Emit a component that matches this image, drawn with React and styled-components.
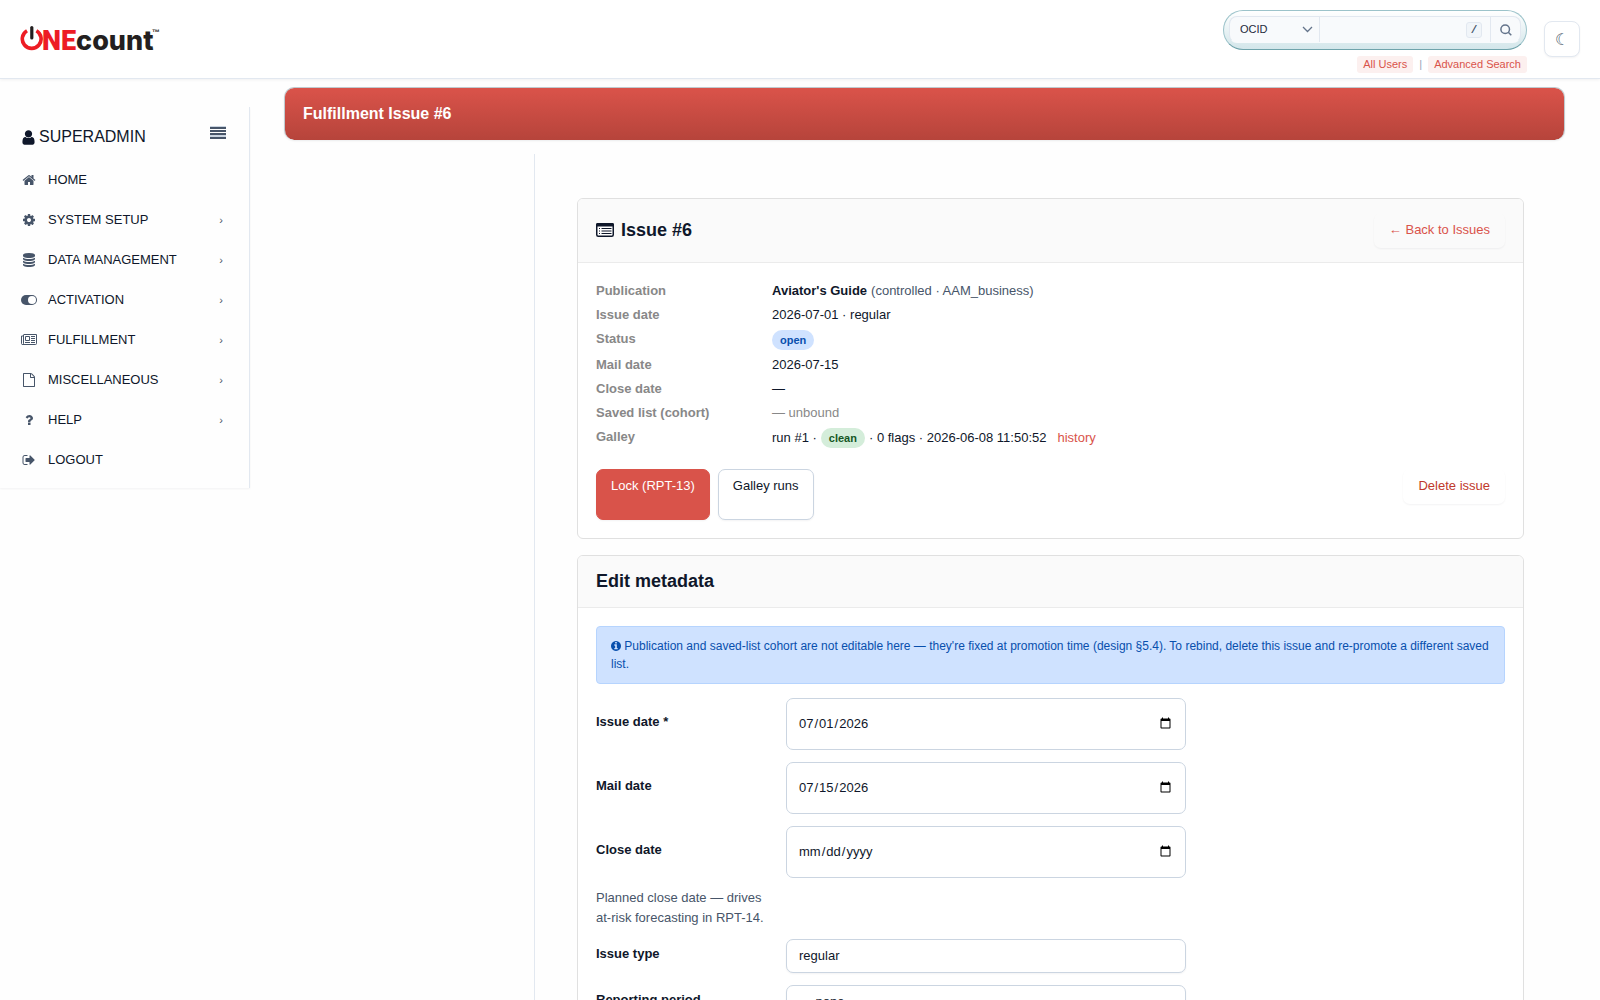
import React from 'react';
import styled, { createGlobalStyle, css } from 'styled-components';

const ink = '#0f172a';
const slate = '#475569';
const line = '#e2e8f0';
const inputLine = '#cbd5e1';
const cardLine = '#e0e0e0';
const brand = '#d9534a';
const sans = "'Liberation Sans', Arial, sans-serif";

const GlobalStyle = createGlobalStyle`
  *, *::before, *::after {
    box-sizing: border-box;
  }

  body {
    margin: 0;
    background: #fefefe;
    color: ${ink};
    font-family: ${sans};
    font-size: 13px;
    line-height: 18px;
  }

  a {
    color: inherit;
    text-decoration: none;
  }

  button, input, select {
    font-family: inherit;
    color: inherit;
  }
`;

const Header = styled.header`
  display: flex;
  align-items: flex-start;
  justify-content: space-between;
  height: 79px;
  padding: 10px 20px 0;
  background: #fff;
  border-bottom: 1px solid ${line};
  box-shadow: 0 1px 3px rgba(15, 23, 42, 0.06);
`;

const LogoLink = styled.a`
  display: block;
  padding-top: 12px;

  svg {
    display: block;
  }
`;

const HeaderTools = styled.div`
  display: flex;
  align-items: flex-start;
  gap: 17px;
`;

const SearchArea = styled.div`
  display: flex;
  flex-direction: column;
  align-items: flex-end;
  gap: 6px;
`;

const SearchPill = styled.form`
  width: 304px;
  height: 40px;
  padding: 5px;
  border: 1px solid #9cc3ca;
  border-bottom-color: #6fa3ab;
  border-radius: 20px;
  background: linear-gradient(#fff, #d3e6ea);
`;

const SearchGroup = styled.div`
  display: flex;
  height: 27px;
  border: 1px solid ${line};
  border-bottom-color: transparent;
  border-radius: 8px;
  background: #f8fafc;
  overflow: hidden;
`;

const SearchType = styled.label`
  display: flex;
  flex: none;
  align-items: center;
  width: 90px;
  padding-right: 6px;
  border-right: 1px solid ${line};
  color: #64748b;

  select {
    flex: 1;
    min-width: 0;
    padding: 0 0 1px 10px;
    border: 0;
    background: none;
    appearance: none;
    color: #1e293b;
    font-size: 11px;
  }

  svg {
    flex: none;
  }
`;

const SearchField = styled.div`
  display: flex;
  flex: 1;
  align-items: center;
  min-width: 0;
  padding-right: 8px;

  input {
    flex: 1;
    min-width: 0;
    border: 0;
    background: none;
    font-size: 12px;
  }
`;

const Key = styled.kbd`
  flex: none;
  width: 16px;
  height: 16px;
  border: 1px solid ${line};
  border-radius: 3px;
  background: #f1f5f9;
  color: ${slate};
  font-family: 'Liberation Mono', monospace;
  font-size: 11px;
  font-weight: bold;
  line-height: 15px;
  text-align: center;
`;

const SearchButton = styled.button`
  display: flex;
  flex: none;
  align-items: center;
  justify-content: center;
  width: 30px;
  padding: 0;
  border: 0;
  border-left: 1px solid ${line};
  background: none;
  color: #64748b;
`;

const SearchLinks = styled.nav`
  display: flex;
  align-items: center;
  gap: 6px;
  color: #94a3b8;
  font-size: 11px;
  line-height: 17px;

  a {
    padding: 0 6px;
    border-radius: 3px;
    background: #fcf0ef;
    color: ${brand};
  }
`;

const ThemeButton = styled.button`
  width: 36px;
  height: 36px;
  margin-top: 11px;
  padding: 0;
  border: 1px solid ${line};
  border-radius: 8px;
  background: #fff;
  box-shadow: 0 1px 2px rgba(15, 23, 42, 0.05);
  color: ${slate};
  font-size: 16px;
`;

const Page = styled.div`
  display: flex;
  align-items: flex-start;
`;

const Sidebar = styled.aside`
  flex: none;
  width: 250px;
  margin-top: 28px;
  padding: 14px 0 8px;
  border-right: 1px solid ${line};
  box-shadow: 0 1px 2px rgba(15, 23, 42, 0.05);
`;

const SidebarTop = styled.div`
  display: flex;
  align-items: center;
  gap: 2px;
  height: 32px;
  margin-bottom: 7px;
  padding: 0 23px 0 20px;
  font-size: 16px;

  button {
    display: flex;
    margin-left: auto;
    margin-bottom: 10px;
    padding: 0;
    border: 0;
    background: none;
  }
`;

const NavLink = styled.a`
  display: flex;
  align-items: center;
  gap: 10px;
  height: 40px;
  padding: 0 26px 0 20px;
`;

const IconCell = styled.i`
  display: flex;
  justify-content: center;
  width: 18px;
  color: ${slate};
`;

const Chevron = styled.span`
  margin-left: auto;
  color: ${slate};
  font-size: 11px;
`;

const Main = styled.main`
  flex: 1;
  min-width: 0;
  padding: 8px 35px 0 34px;
`;

const Banner = styled.h1`
  margin: 0 0 14px;
  padding: 15px 18px 16px;
  border: 1px solid rgba(130, 150, 160, 0.5);
  border-bottom-width: 0;
  border-radius: 10px;
  background: linear-gradient(#da534a, #b6443b) padding-box;
  box-shadow: 0 1px 2px rgba(15, 23, 42, 0.08);
  color: #fff;
  font-size: 16px;
  line-height: 21px;
`;

const Content = styled.div`
  display: flex;
  flex-direction: column;
  gap: 16px;
  margin-left: 250px;
  padding: 44px 41px 40px 42px;
  border-left: 1px solid ${line};
`;

const Card = styled.section`
  border: 1px solid ${cardLine};
  border-radius: 6px;
  background: #fff;
  overflow: hidden;
`;

const CardHeader = styled.div`
  display: flex;
  align-items: center;
  justify-content: space-between;
  padding: 14px 18px;
  border-bottom: 1px solid #ebebeb;
  background: #fafafa;
`;

const CardTitle = styled.h2`
  display: flex;
  align-items: center;
  gap: 7px;
  margin: 0;
  font-size: 18px;
  line-height: 23px;
`;

const CardBody = styled.div`
  padding: 18px;
`;

const Button = styled.button`
  display: flex;
  align-items: flex-start;
  padding: 7px 14px 8px;
  border: 1px solid transparent;
  border-radius: 7px;
  background: transparent;
  box-shadow: 0 1px 2px rgba(15, 23, 42, 0.05);
  color: ${brand};
  font-size: 13px;
  line-height: 18px;

  ${({ $kind }) =>
    $kind === 'primary' &&
    css`
      border-color: ${brand};
      background: ${brand};
      color: #fff;
    `}

  ${({ $kind }) =>
    $kind === 'outline' &&
    css`
      border-color: ${inputLine};
      background: #fff;
      color: ${ink};
    `}

  ${({ $kind }) =>
    $kind === 'danger' &&
    css`
      color: #c0392b;
    `}
`;

const Details = styled.dl`
  display: grid;
  grid-template-columns: 160px 1fr;
  gap: 6px 16px;
  margin: 1px 0 21px;

  dt {
    color: #888;
    font-weight: bold;
  }

  dd {
    display: flex;
    align-items: center;
    gap: 4px;
    margin: 0;
  }
`;

const Muted = styled.span`
  color: ${({ $light }) => ($light ? '#888' : slate)};
`;

const Badge = styled.span`
  padding: 0 8px;
  border-radius: 10px;
  background: ${({ $tone }) => ($tone === 'green' ? '#d4edda' : '#cfe2ff')};
  color: ${({ $tone }) => ($tone === 'green' ? '#155724' : '#084fad')};
  font-size: 11px;
  font-weight: bold;
  line-height: 20px;
`;

const HistoryLink = styled.a`
  margin-left: 7px;
  color: ${brand};
`;

const Actions = styled.div`
  display: flex;
  gap: 8px;

  form {
    margin: 0 0 16px auto;
  }
`;

const Notice = styled.div`
  margin-bottom: 14px;
  padding: 10px 14px;
  border: 1px solid #b6d4fe;
  border-radius: 4px;
  background: #cfe2ff;
  color: #084fad;
  font-size: 12px;
  line-height: 18px;

  svg {
    vertical-align: -2px;
  }
`;

const Fields = styled.form`
  display: grid;
  grid-template-columns: 176px minmax(0, 400px);
  gap: 12px 14px;
  align-items: center;
`;

const Label = styled.label`
  grid-column: 1;
  margin-bottom: 5px;
  font-weight: bold;
`;

const fieldBox = css`
  width: 100%;
  border: 1px solid ${inputLine};
  border-radius: 7px;
  background: #fff;
  font-size: 13px;
`;

const DateInput = styled.input`
  ${fieldBox}
  height: 52px;
  padding: 0 11px 1px;
`;

const Select = styled.select`
  ${fieldBox}
  height: 34px;
  padding: 0 12px 1px;
  appearance: none;
  box-shadow: 0 1px 2px rgba(15, 23, 42, 0.05);
`;

const Hint = styled.p`
  grid-column: 1;
  margin: -2px 0 -1px;
  color: ${slate};
  line-height: 20px;
`;

const paths = {
  user:
    'M1536 1399q0 109-62.5 187t-150.5 78h-854q-88 0-150.5-78t-62.5-187q0-85 8.5-160.5t31.5-152 58.5-131 94-89 134.5-34.5q131 128 313 128t313-128q76 0 134.5 34.5t94 89 58.5 131 31.5 152 8.5 160.5zm-256-887q0 159-112.5 271.5t-271.5 112.5-271.5-112.5-112.5-271.5 112.5-271.5 271.5-112.5 271.5 112.5 112.5 271.5z',
  home:
    'M1472 992v480q0 26-19 45t-45 19h-384v-384h-256v384h-384q-26 0-45-19t-19-45v-480q0-1 .5-3t.5-3l575-474 575 474q1 2 1 6zm223-69l-62 74q-8 9-21 11h-3q-13 0-21-7l-692-577-692 577q-12 8-24 7-13-2-21-11l-62-74q-8-10-7-23.5t11-21.5l719-599q32-26 76-26t76 26l244 204v-195q0-14 9-23t23-9h192q14 0 23 9t9 23v408l219 182q10 8 11 21.5t-7 23.5z',
  cog:
    'M1152 896q0-106-75-181t-181-75-181 75-75 181 75 181 181 75 181-75 75-181zm512-109v222q0 12-8 23t-20 13l-185 28q-19 54-39 91 35 50 107 138 10 12 10 25t-9 23q-27 37-99 108t-94 71q-12 0-26-9l-138-108q-44 23-91 38-16 136-29 186-7 28-36 28h-222q-14 0-24.5-8.5t-11.5-21.5l-28-184q-49-16-90-37l-141 107q-10 9-25 9-14 0-25-11-126-114-165-168-7-10-7-23 0-12 8-23 15-21 51-66.5t54-70.5q-27-50-41-99l-183-27q-13-2-21-12.5t-8-23.5v-222q0-12 8-23t19-13l186-28q14-46 39-92-40-57-107-138-10-12-10-24 0-10 9-23 26-36 98.5-107.5t94.5-71.5q13 0 26 10l138 107q44-23 91-38 16-136 29-186 7-28 36-28h222q14 0 24.5 8.5t11.5 21.5l28 184q49 16 90 37l142-107q9-9 24-9 13 0 25 10 129 119 165 170 7 8 7 22 0 12-8 23-15 21-51 66.5t-54 70.5q26 50 41 98l183 28q13 2 21 12.5t8 23.5z',
  database:
    'M896 768q237 0 443-43t325-127v170q0 69-103 128t-280 93.5-385 34.5-385-34.5-280-93.5-103-128v-170q119 84 325 127t443 43zm0 768q237 0 443-43t325-127v170q0 69-103 128t-280 93.5-385 34.5-385-34.5-280-93.5-103-128v-170q119 84 325 127t443 43zm0-384q237 0 443-43t325-127v170q0 69-103 128t-280 93.5-385 34.5-385-34.5-280-93.5-103-128v-170q119 84 325 127t443 43zm0-1152q208 0 385 34.5t280 93.5 103 128v128q0 69-103 128t-280 93.5-385 34.5-385-34.5-280-93.5-103-128v-128q0-69 103-128t280-93.5 385-34.5z',
  file:
    'M1596 380q28 28 48 76t20 88v1152q0 40-28 68t-68 28h-1344q-40 0-68-28t-28-68v-1600q0-40 28-68t68-28h896q40 0 88 20t76 48zm-444-244v376h376q-10-29-22-41l-313-313q-12-12-41-22zm384 1528v-1024h-416q-40 0-68-28t-28-68v-416h-768v1536h1280z',
  question:
    'M1088 1256v240q0 16-12 28t-28 12h-240q-16 0-28-12t-12-28v-240q0-16 12-28t28-12h240q16 0 28 12t12 28zm316-600q0 54-15.5 101t-35 76.5-55 59.5-57.5 43.5-61 35.5q-41 23-68.5 65t-27.5 67q0 17-12 32.5t-28 15.5h-240q-15 0-25.5-18.5t-10.5-37.5v-45q0-83 65-156.5t143-108.5q59-27 84-56t25-76q0-42-46.5-74t-107.5-32q-65 0-108 29-35 25-107 115-13 16-31 16-12 0-25-8l-164-125q-13-10-15.5-25t5.5-28q160-266 464-266 80 0 161 31t146 83 106 127.5 41 158.5z',
  signOut:
    'M704 1440q0 4 1 20t.5 26.5-3 23.5-10 19.5-20.5 6.5h-320q-119 0-203.5-84.5t-84.5-203.5v-704q0-119 84.5-203.5t203.5-84.5h320q13 0 22.5 9.5t9.5 22.5q0 4 1 20t.5 26.5-3 23.5-10 19.5-20.5 6.5h-320q-66 0-113 47t-47 113v704q0 66 47 113t113 47h312l11.5 1 11.5 3 8 5.5 7 9 2 13.5zm928-544q0 26-19 45l-544 544q-19 19-45 19t-45-19-19-45v-288h-448q-26 0-45-19t-19-45v-384q0-26 19-45t45-19h448v-288q0-26 19-45t45-19 45 19l544 544q19 19 19 45z',
  info:
    'M1152 1376v-160q0-14-9-23t-23-9h-96v-512q0-14-9-23t-23-9h-320q-14 0-23 9t-9 23v160q0 14 9 23t23 9h96v320h-96q-14 0-23 9t-9 23v160q0 14 9 23t23 9h448q14 0 23-9t9-23zm-128-896v-160q0-14-9-23t-23-9h-192q-14 0-23 9t-9 23v160q0 14 9 23t23 9h192q14 0 23-9t9-23zm640 416q0 209-103 385.5t-279.5 279.5-385.5 103-385.5-103-279.5-279.5-103-385.5 103-385.5 279.5-279.5 385.5-103 385.5 103 279.5 279.5 103 385.5z',
};

const Icon = ({ name, size = 14, crop = '0 0 1792 1792', width = size }) => (
  <svg width={width} height={size} viewBox={crop} aria-hidden="true">
    <path d={paths[name]} fill="currentColor" />
  </svg>
);

const ToggleIcon = () => (
  <svg width="16" height="14" viewBox="0 0 16 14" aria-hidden="true">
    <rect x="0" y="2" width="16" height="10" rx="5" fill="currentColor" />
    <circle cx="11" cy="7" r="4" fill="#fff" />
  </svg>
);

const NewspaperIcon = () => (
  <svg width="16" height="14" viewBox="0 0 16 14" aria-hidden="true">
    <path
      d="M2.5 1.5h13v9q0 1-1 1h-13q-1 0-1-1v-7.5h2M2.5 2v8.5q0 1-1 1"
      fill="none"
      stroke="currentColor"
    />
    <path
      d="M4.5 3.5h4v4h-4zM4 9.5h5M10 3.5h4M10 5.5h4M10 7.5h4M10 9.5h4"
      fill="none"
      stroke="currentColor"
    />
  </svg>
);

const ListIcon = () => (
  <svg width="18" height="16" viewBox="0 0 18 16" aria-hidden="true">
    <rect x="0.75" y="0.75" width="16.5" height="12.5" rx="1.5" fill="#fff" stroke="currentColor" strokeWidth="1.5" />
    <path d="M0 3.5v-2Q0 0 1.5 0h15Q18 0 18 1.5v2z" fill="currentColor" />
    <path
      d="M3 5.5h1M3 8h1M3 10.5h1M5.5 5.5h10M5.5 8h10M5.5 10.5h10"
      stroke="currentColor"
      strokeWidth="1.2"
    />
  </svg>
);

const MenuIcon = () => (
  <svg width="16" height="13" viewBox="0 0 16 13" aria-hidden="true">
    <path d="M0 .5h16M0 10h16" stroke={inputLine} strokeWidth="2" />
    <path d="M0 2h16M0 5h16M0 8h16M0 12h16" stroke={slate} strokeWidth="2" />
  </svg>
);

const Logo = () => (
  <svg width="146" height="34" viewBox="0 0 146 34" role="img" aria-label="ONEcount">
    <path
      d="M7 8.8A9.4 9.4 0 1 0 16.4 8.8"
      fill="none"
      stroke="#ed1c24"
      strokeWidth="3.6"
    />
    <path d="M11.8 5.5v10.5" stroke="#231f20" strokeWidth="3.2" strokeLinecap="round" />
    <text x="22" y="28" fontFamily="Roboto, sans-serif" fontSize="27" fontWeight="900">
      <tspan fill="#ed1c24">NE</tspan>
      <tspan fill="#231f20" fontFamily="Inter, sans-serif" fontWeight="800">count</tspan>
    </text>
    <text x="132" y="13" fontSize="8" fontWeight="bold" fill="#231f20">™</text>
  </svg>
);

const navItems = [
  { label: 'HOME', icon: <Icon name="home" /> },
  { label: 'SYSTEM SETUP', icon: <Icon name="cog" />, nested: true },
  { label: 'DATA MANAGEMENT', icon: <Icon name="database" />, nested: true },
  { label: 'ACTIVATION', icon: <ToggleIcon />, nested: true },
  { label: 'FULFILLMENT', icon: <NewspaperIcon />, nested: true },
  { label: 'MISCELLANEOUS', icon: <Icon name="file" />, nested: true },
  { label: 'HELP', icon: <Icon name="question" />, nested: true },
  { label: 'LOGOUT', icon: <Icon name="signOut" /> },
];

const dateFields = [
  { id: 'issue-date', label: 'Issue date *', value: '2026-07-01' },
  { id: 'mail-date', label: 'Mail date', value: '2026-07-15' },
  { id: 'close-date', label: 'Close date', value: '' },
];

function TopBar() {
  return (
    <Header>
      <LogoLink href="#home">
        <Logo />
      </LogoLink>
      <HeaderTools>
        <SearchArea>
          <SearchPill>
            <SearchGroup>
              <SearchType>
                <select aria-label="Search by" defaultValue="OCID">
                  <option>OCID</option>
                </select>
                <svg width="11" height="7" viewBox="0 0 11 7" aria-hidden="true">
                  <path d="M1 1l4.5 4.5L10 1" fill="none" stroke="currentColor" strokeWidth="1.3" />
                </svg>
              </SearchType>
              <SearchField>
                <input type="text" aria-label="Search users" />
                <Key>/</Key>
              </SearchField>
              <SearchButton type="button" aria-label="Search">
                <svg width="12" height="12" viewBox="0 0 12 12" aria-hidden="true">
                  <circle cx="5.2" cy="5.2" r="4.3" fill="none" stroke="currentColor" strokeWidth="1.5" />
                  <path d="M8.3 8.3l3 3" stroke="currentColor" strokeWidth="1.5" />
                </svg>
              </SearchButton>
            </SearchGroup>
          </SearchPill>
          <SearchLinks>
            <a href="#all-users">All Users</a>
            <span>|</span>
            <a href="#advanced">Advanced Search</a>
          </SearchLinks>
        </SearchArea>
        <ThemeButton type="button" aria-label="Dark mode">☾</ThemeButton>
      </HeaderTools>
    </Header>
  );
}

function SideNav() {
  return (
    <Sidebar>
      <SidebarTop>
        <Icon name="user" size={17} />
        <span>SUPERADMIN</span>
        <button type="button" aria-label="Collapse menu">
          <MenuIcon />
        </button>
      </SidebarTop>
      <nav>
        {navItems.map(({ label, icon, nested }) => (
          <NavLink key={label} href="#nav">
            <IconCell>{icon}</IconCell>
            <span>{label}</span>
            {nested && <Chevron>›</Chevron>}
          </NavLink>
        ))}
      </nav>
    </Sidebar>
  );
}

function IssueCard() {
  return (
    <Card>
      <CardHeader>
        <CardTitle>
          <ListIcon />
          Issue #6
        </CardTitle>
        <Button as="a" href="#issues">← Back to Issues</Button>
      </CardHeader>
      <CardBody>
        <Details>
          <dt>Publication</dt>
          <dd>
            <strong>Aviator's Guide</strong>
            <Muted>(controlled · AAM_business)</Muted>
          </dd>
          <dt>Issue date</dt>
          <dd>2026-07-01 · regular</dd>
          <dt>Status</dt>
          <dd>
            <Badge>open</Badge>
          </dd>
          <dt>Mail date</dt>
          <dd>2026-07-15</dd>
          <dt>Close date</dt>
          <dd>—</dd>
          <dt>Saved list (cohort)</dt>
          <dd>
            <Muted $light>— unbound</Muted>
          </dd>
          <dt>Galley</dt>
          <dd>
            run #1 ·
            <Badge $tone="green">clean</Badge>
            · 0 flags · 2026-06-08 11:50:52
            <HistoryLink href="#history">history</HistoryLink>
          </dd>
        </Details>
        <Actions>
          <Button type="button" $kind="primary">Lock (RPT-13)</Button>
          <Button as="a" href="#galley" $kind="outline">Galley runs</Button>
          <form>
            <Button type="button" $kind="danger">Delete issue</Button>
          </form>
        </Actions>
      </CardBody>
    </Card>
  );
}

function MetadataCard() {
  return (
    <Card>
      <CardHeader>
        <CardTitle>Edit metadata</CardTitle>
      </CardHeader>
      <CardBody>
        <Notice>
          <Icon name="info" size={12} width={10} crop="128 0 1536 1792" /> Publication and saved-list
          cohort are not editable here — they're fixed at promotion time (design §5.4). To rebind,
          delete this issue and re-promote a different saved list.
        </Notice>
        <Fields>
          {dateFields.map(({ id, label, value }) => (
            <React.Fragment key={id}>
              <Label htmlFor={id}>{label}</Label>
              <DateInput type="date" id={id} defaultValue={value} />
            </React.Fragment>
          ))}
          <Hint>Planned close date — drives at-risk forecasting in RPT-14.</Hint>
          <Label htmlFor="issue-type">Issue type</Label>
          <Select id="issue-type" defaultValue="regular">
            <option>regular</option>
          </Select>
          <Label htmlFor="reporting-period">Reporting period</Label>
          <Select id="reporting-period" defaultValue="— none —">
            <option>— none —</option>
          </Select>
        </Fields>
      </CardBody>
    </Card>
  );
}

function App() {
  return (
    <>
      <GlobalStyle />
      <TopBar />
      <Page>
        <SideNav />
        <Main>
          <Banner>Fulfillment Issue #6</Banner>
          <Content>
            <IssueCard />
            <MetadataCard />
          </Content>
        </Main>
      </Page>
    </>
  );
}

export default App;
